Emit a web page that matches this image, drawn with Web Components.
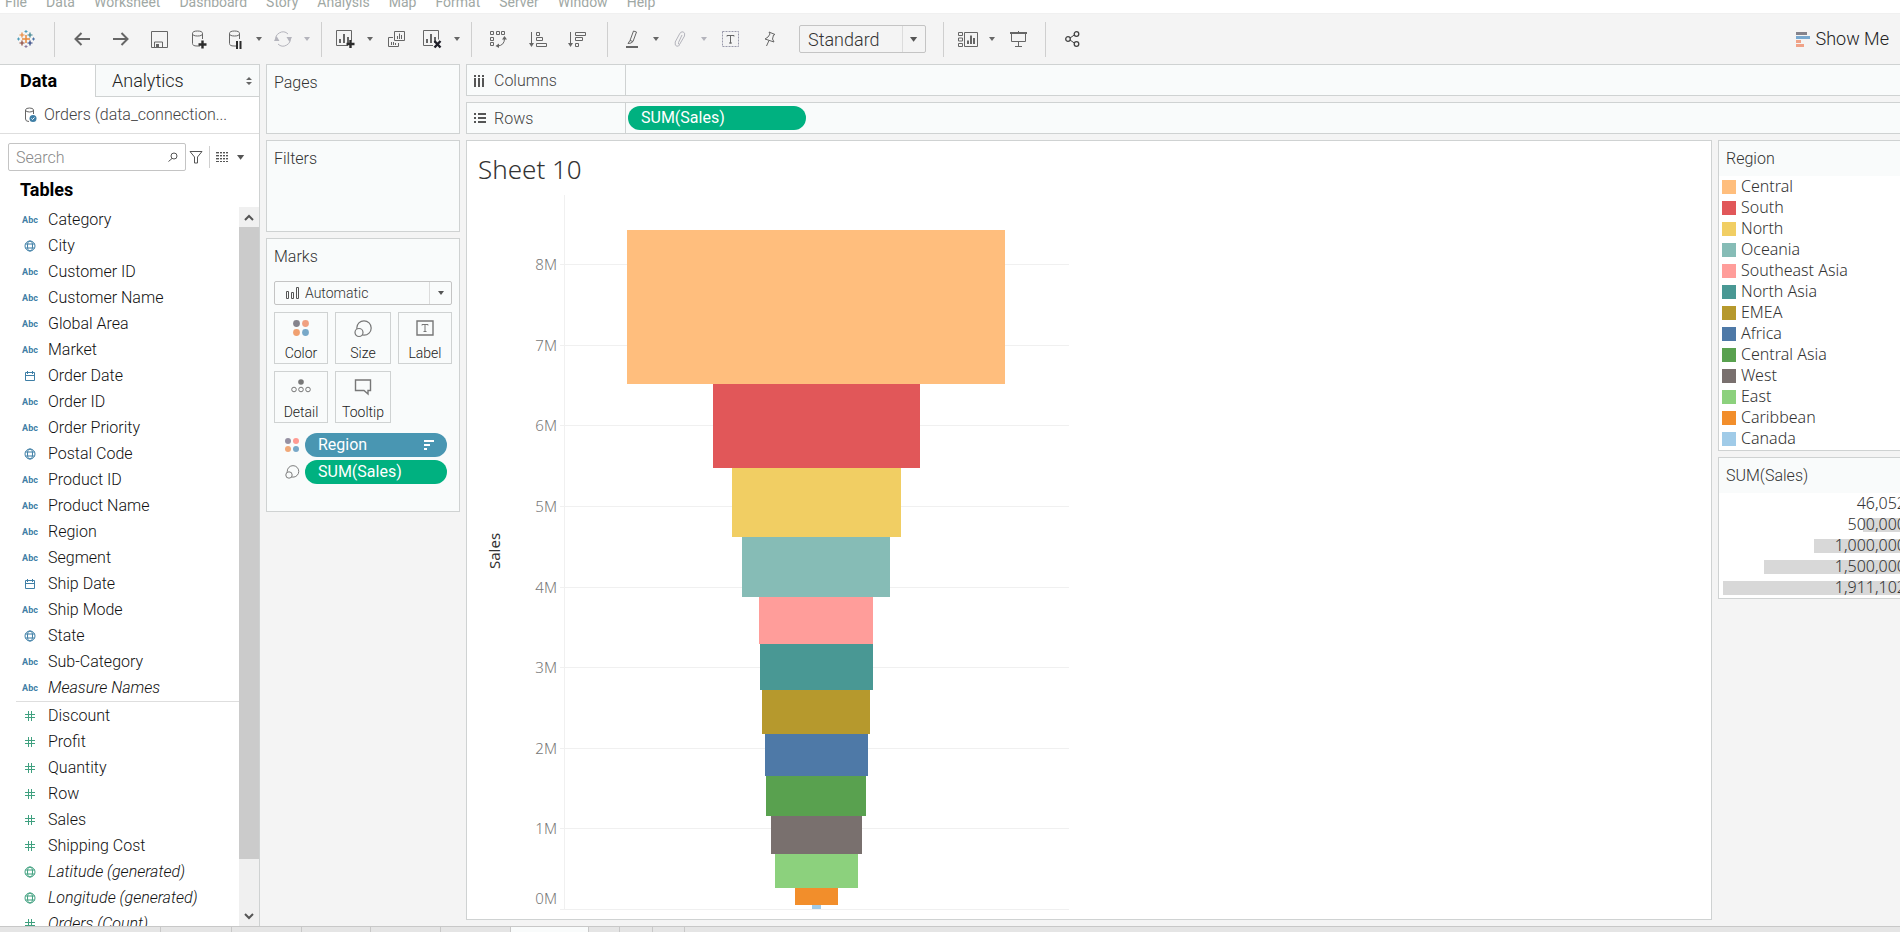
<!DOCTYPE html>
<html lang="en">
<head>
<meta charset="utf-8">
<title>Workbook - Sheet 10</title>
<style>
html,body{margin:0;height:100%}
body{overflow:hidden;font:300 16px/20px Roboto,"Liberation Sans",sans-serif;color:#333;background:#f4f4f4}
</style>
</head>
<body>
<wb-app></wb-app>
<script>
const BASE = '*{box-sizing:border-box}button{font:inherit;color:inherit;background:none;border:0;padding:0;margin:0}';

function define(name, css, render) {
  customElements.define(name, class extends HTMLElement {
    connectedCallback() {
      if (this.shadowRoot) return;
      const t = document.createElement('template');
      t.innerHTML = `<style>${BASE}${css}</style>${render(this)}`;
      this.attachShadow({mode: 'open'}).append(t.content.cloneNode(true));
    }
  });
}

/* icon artwork: [width, height, markup] */
const barsIn = (x, y) => `<path stroke-width="2" d="M${x} ${y}v-4M${x + 4} ${y}v-9M${x + 8} ${y}v-6"/>`;
const cyl = '<path d="M9 16H6Q1.500 16 1.500 13.500V3.500"/><path d="M11.500 3.500V9"/><ellipse cx="6.500" cy="3.500" rx="5" ry="2.500"/>';
const ICONS = {
  logo: [18, 18, '<path stroke="#e8883a" stroke-width="1.500" d="M5 9h8M9 5v8"/><path stroke="#e8883a" stroke-width="1.200" d="M5 2.500v5M2.500 5h5"/><path stroke="#36808d" stroke-width="1.200" d="M13 2.500v5M10.500 5h5"/><path stroke="#8a4436" stroke-width="1.200" d="M5 10.500v5M2.500 13h5"/><path stroke="#2a3f7e" stroke-width="1.200" d="M13 10.500v5M10.500 13h5"/><path stroke="#4f9dba" d="M9 0v3M7.500 1.500h3M1.500 7.500v3M0 9h3"/><path stroke="#4a74a8" d="M16.500 7.500v3M15 9h3"/><path stroke="#8a7ba0" d="M9 15v3M7.500 16.500h3"/>'],
  back: [16, 14, '<path stroke-width="2" d="M16 7H1.500M7.500 1L1.500 7l6 6"/>'],
  fwd: [16, 14, '<path stroke-width="2" d="M0 7h14.500M8.500 1l6 6-6 6"/>'],
  save: [17, 17, '<path d="M.5.5h16v16H.5zM3.500 16v-5h8v5"/><path stroke="none" fill="currentColor" d="M5 13h3v3H5z"/>'],
  dbadd: [16, 19, cyl + '<path stroke="#2b2b2b" stroke-width="2.400" d="M7.500 14.500h8M11.500 10.500v8"/>'],
  dbpause: [14, 19, cyl + '<path stroke="#2b2b2b" stroke-width="2" d="M9 11v8M12.500 11v8"/>'],
  dbok: [13, 16, '<path d="M5 14.500Q1.500 14.500 1.500 12V3M9.500 3v4"/><ellipse cx="5.500" cy="3" rx="4" ry="2"/><circle cx="9" cy="11.500" r="3.500" fill="#3f7fa6" stroke="none"/><path stroke="#fff" d="M7.500 11.500l1 1 2-2"/>'],
  refresh: [18, 18, '<path d="M2 11A7.200 7.200 0 0 1 14 4M16 7A7.200 7.200 0 0 1 4 14"/><path stroke="none" fill="currentColor" d="M0 11l2.500-5 3 5zM12.500 7l3 5L18 7z"/>'],
  wsadd: [20, 18, '<path d="M12 15.500H.5V.5h15v10"/>' + barsIn(4, 13) + '<path stroke="#2b2b2b" stroke-width="2.400" d="M10.500 14h8M14.500 10v8"/>'],
  wsdel: [20, 18, '<path d="M10 15.500H.5V.5h15v9"/>' + barsIn(4, 13) + '<path stroke="#20202a" stroke-width="2.400" d="M11.500 11l6 6.500M17.500 11l-6 6.500"/>'],
  wsdup: [17, 16, '<path d="M6.500.5h10v9h-10zM5 6.500H.5v9h10V12"/><path d="M9.500 8V5M11.500 8V2.500M13.500 8V4M3.500 14v-3M5.500 14v-3M7.500 14v-2"/>'],
  swap: [17, 17, '<path d="M.5.5h3v3h-3zM6.500.5h3v3h-3zM11.500.5h3v3h-3zM.5 6.500h3v3h-3zM.5 11.500h3v3h-3zM14.500 7.500q0 7-7 7.500"/><path stroke="none" fill="currentColor" d="M12 8.500l2.500-3.500L17 8.500zM9 12.500v4.500L5.500 15z"/>'],
  sortasc: [18, 15, '<path d="M2.500 0v12M7.500.5h3v3h-3zM7.500 5.500h6v3h-6zM7.500 11.500h10v3h-10z"/><path stroke="none" fill="currentColor" d="M0 11h5l-2.500 4z"/>'],
  sortdesc: [18, 15, '<path d="M2.500 0v12M7.500.5h10v3h-10zM7.500 5.500h7v3h-7zM7.500 11.500h3v3h-3z"/><path stroke="none" fill="currentColor" d="M0 11h5l-2.500 4z"/>'],
  pen: [12, 18, '<path d="M7.500 1l3 1L7 11.500l-3-1zM4 10.500L2 13.500l3-.500 2-1.500"/><path stroke-width="2" d="M0 17h12"/>'],
  clip: [12, 16, '<path d="M8 4L4.500 11.500Q4 13.500 5.500 13.500L10.500 5Q11.500 1.500 9 .8 6.500.5 5.500 3L1.200 11Q.5 15 3 15.300 5 15 6 13.500"/>'],
  text: [17, 16, '<path stroke-dasharray="2 1" stroke="#99a" d="M.5.5h16v15H.5z"/><path d="M5 5.500V4.500h7v1M8.500 4.500v8M7 12h3"/>'],
  pin: [12, 16, '<path d="M5 1l6 2.500-1.500.500L8.500 8l1.500 3L1 8l3-2L6 3zM5 9.500L2.500 15"/>'],
  cards: [20, 15, '<path d="M.5.500h4v3h-4zM.5 6h4v3h-4zM.5 11.500h4v3h-4zM6.500.5h13v14h-13z"/><path stroke-width="2" d="M10 12V8.500M13 12V3.500M16 12V6"/>'],
  present: [17, 16, '<path stroke-width="2" d="M0 2h17"/><path d="M8.500 0v1M1.500 2.500v8h14v-8M8.500 10.500v5M5 15.500h7"/>'],
  share: [15, 16, '<path stroke="#444" d="M5 7l5-3.500M5 9l5 3.500"/><g stroke="#444" stroke-width="1.300"><circle cx="3" cy="8" r="2.300"/><circle cx="11.500" cy="3" r="2.300"/><circle cx="11.500" cy="13" r="2.300"/></g>'],
  showme: [14, 15, '<g stroke="none"><path fill="#85838c" d="M0 0h11v3H0z"/><path fill="#78a8cf" d="M0 4h14v3H0z"/><path fill="#f0a287" d="M0 8h5v3H0zM0 12h8v3H0z"/></g>'],
  caret: [6, 4, '<path stroke="none" fill="currentColor" d="M0 0h6L3 4z"/>'],
  updown: [6, 8, '<path stroke="none" fill="currentColor" d="M0 3L3 0l3 3zM0 5h6L3 8z"/>'],
  mag: [10, 10, '<circle cx="6" cy="4" r="3"/><path d="M4 6.500L.5 9.500"/>'],
  funnel: [14, 13, '<path d="M1 .5h12L8.500 6v6h-3V6z"/>'],
  grid: [12, 10, '<path d="M0 .5h12M0 3.500h12M0 6.500h12M0 9.500h12" stroke-dasharray="3 1 2 1 2 1 2 1"/><path stroke-opacity=".4" d="M0 1.500h12M0 4.500h12M0 7.500h12" stroke-dasharray="3 1 2 1 2 1 2 1"/>'],
  cols: [10, 12, '<path stroke-width="2" d="M1 0v2M5 0v2M9 0v2M1 3v9M5 3v9M9 3v9"/>'],
  rows: [12, 11, '<path stroke-width="2" d="M0 1h2M0 5h2M0 9h2M4 1h8M4 5h8M4 9h8"/>'],
  globe: [12, 12, '<circle cx="6" cy="6" r="5"/><ellipse cx="6" cy="6" rx="2.500" ry="5"/><path d="M1.500 4h9M1.500 8h9"/>'],
  date: [10, 10, '<path d="M.5 1.500h9v8h-9zM0 4.500h10M2.500 0v3M7.500 0v3"/>'],
  hash: [10, 10, '<path d="M0 3.500h10M0 6.500h10M3.500 0v10M6.500 0v10"/>'],
  up: [10, 7, '<path stroke-width="2" d="M1 6l4-4 4 4"/>'],
  down: [10, 7, '<path stroke-width="2" d="M1 1l4 4 4-4"/>'],
  bars: [14, 12, '<path d="M.5 4.500h2v7h-2zM5.500 5.500h2v6h-2zM10.500.5h2v11h-2z"/>'],
  color: [16, 16, '<g stroke="none"><circle cx="3.500" cy="3.500" r="3.400" fill="#85838c"/><circle cx="12.500" cy="3.500" r="3.400" fill="#f0a080"/><circle cx="3.500" cy="12.500" r="3.400" fill="#f0a070"/><circle cx="12.500" cy="12.500" r="3.400" fill="#78a8c8"/></g>'],
  colors: [14, 14, '<g stroke="none"><circle cx="3" cy="3" r="3" fill="#9690a2"/><circle cx="11" cy="3" r="3" fill="#ff9a92"/><circle cx="3" cy="11" r="3" fill="#f0a878"/><circle cx="11" cy="11" r="3" fill="#78a8c8"/></g>'],
  size: [18, 17, '<circle cx="10" cy="8" r="7.200" stroke-width="1.200"/><circle cx="5" cy="12.500" r="4" fill="#f9fbfb" stroke-width="1.200"/>'],
  label: [18, 16, '<path stroke-width="1.400" d="M1 1h16v14H1z"/><path d="M6 5.500v-1h6v1M9 4.500v7M7.500 11.500h3"/>'],
  detail: [20, 14, '<circle cx="10" cy="3" r="2.800" fill="currentColor" stroke="none"/><circle cx="3" cy="10.500" r="2.300"/><circle cx="10" cy="10.500" r="2.300"/><circle cx="17" cy="10.500" r="2.300"/>'],
  tip: [18, 16, '<path stroke-width="1.400" d="M1.500 1h15v10.500H14V15l-4-3.500H1.500z"/>'],
  sort: [10, 10, '<path stroke-width="2" d="M0 1h10M0 5h6M0 9h3"/>']
};
define('wb-icon', ':host{display:block;flex:none}svg{display:block;overflow:visible}', el => {
  const [w, h, art] = ICONS[el.getAttribute('name')];
  const s = Number(el.getAttribute('scale') || 1);
  return `<svg width="${w * s}" height="${h * s}" viewBox="0 0 ${w} ${h}" fill="none" stroke="currentColor" aria-hidden="true">${art}</svg>`;
});

define('wb-menubar', `
:host{display:block;background:#fff}
nav{display:flex;align-items:flex-end;gap:19px;height:13px;padding-left:5px;overflow:hidden;font-size:14px;font-weight:400;color:#9fa8a4}
button{line-height:22px}`, () =>
  `<nav>${'File Data Worksheet Dashboard Story Analysis Map Format Server Window Help'.split(' ').map(m => `<button>${m}</button>`).join('')}</nav>`);

define('wb-tool', `
:host{display:flex}
button{display:flex;align-items:center;justify-content:center;width:39px;height:30px;color:#666}
:host([menu]) .main{width:34px}
.more{width:14px}
:host([off]) button{color:#b4b4bc}`, el => {
  const n = el.getAttribute('name');
  return `<button class="main" aria-label="${n}"><wb-icon name="${n}"></wb-icon></button>` +
    (el.hasAttribute('menu') ? `<button class="more" aria-label="${n} options"><wb-icon name="caret"></wb-icon></button>` : '');
});

define('wb-toolbar', `
:host{display:flex;align-items:center;height:51px;background:#f4f4f4;border-top:1px solid #f0f0f0}
i{width:1px;height:35px;margin:0 7px;background:#cfcfcf}
.home{display:flex;padding:0 2px 0 6px}
.sorts{display:flex;padding-right:4px}
.fit{display:flex;align-items:center;width:127px;height:28px;margin:0 10px;border:1px solid #c4c4c4;border-radius:2px;position:relative}
select{appearance:none;width:100%;height:100%;border:0;background:none;font:300 18px Roboto,sans-serif;color:#333;padding:0 8px}
.drop{position:absolute;right:0;top:0;width:23px;height:26px;border-left:1px solid #dcdcdc;display:grid;place-items:center;color:#555;pointer-events:none}
.show{display:flex;align-items:center;gap:6px;margin-left:auto;padding-right:11px;font-size:18px;color:#222}`, () => `
<span class="home"><wb-tool name="logo"></wb-tool></span><i></i>
<wb-tool name="back"></wb-tool><wb-tool name="fwd"></wb-tool><wb-tool name="save"></wb-tool><wb-tool name="dbadd"></wb-tool>
<wb-tool name="dbpause" menu></wb-tool><wb-tool name="refresh" menu off></wb-tool><i></i>
<wb-tool name="wsadd" menu></wb-tool><wb-tool name="wsdup"></wb-tool><wb-tool name="wsdel" menu></wb-tool><i></i>
<span class="sorts"><wb-tool name="swap"></wb-tool><wb-tool name="sortasc"></wb-tool><wb-tool name="sortdesc"></wb-tool></span><i></i>
<wb-tool name="pen" menu></wb-tool><wb-tool name="clip" menu off></wb-tool><wb-tool name="text"></wb-tool><wb-tool name="pin"></wb-tool>
<span class="fit"><select aria-label="Fit"><option>Standard</option><option>Entire View</option></select><span class="drop"><wb-icon name="caret" scale="1.2"></wb-icon></span></span><i></i>
<wb-tool name="cards" menu></wb-tool><wb-tool name="present"></wb-tool><i></i><wb-tool name="share"></wb-tool>
<button class="show"><wb-icon name="showme"></wb-icon>Show Me</button>`);

define('wb-field', `
:host{display:flex;align-items:center;height:26px;padding-left:20px;color:#3f7fa6}
:host([measure]){color:#3fa07f}
.i{width:20px;display:grid;place-items:center;margin-right:8px;flex:none}
b{font:700 9px/12px Roboto,sans-serif}
.n{color:#111;white-space:nowrap}
:host([calc]) .n{font-style:italic}`, el => {
  const t = el.getAttribute('type');
  return `<span class="i">${t === 'abc' ? '<b>Abc</b>' : `<wb-icon name="${t}"></wb-icon>`}</span><span class="n"><slot></slot></span>`;
});

const FIELDS = [['Category'], ['City', 'globe'], ['Customer ID'], ['Customer Name'], ['Global Area'], ['Market'], ['Order Date', 'date'],
  ['Order ID'], ['Order Priority'], ['Postal Code', 'globe'], ['Product ID'], ['Product Name'], ['Region'], ['Segment'],
  ['Ship Date', 'date'], ['Ship Mode'], ['State', 'globe'], ['Sub-Category'], ['Measure Names', 'abc', 'calc']];
const MEASURES = [['Discount'], ['Profit'], ['Quantity'], ['Row'], ['Sales'], ['Shipping Cost'],
  ['Latitude (generated)', 'globe', 'calc'], ['Longitude (generated)', 'globe', 'calc'], ['Orders (Count)', 'hash', 'calc']];
const fieldRow = (d, extra) => ([n, t = d, c = '']) => `<wb-field type="${t}" ${c} ${extra}>${n}</wb-field>`;

define('wb-datapane', `
:host{display:flex;flex-direction:column;min-height:0;background:#fff;border-top:1px solid #cfd2d2;border-right:1px solid #cfd2d2}
.tabs{display:flex;height:32px;font-size:18px;color:#222}
.tabs button{text-align:left}
.on{width:95px;padding-left:20px;font-weight:700;color:#000}
.off{flex:1;display:flex;align-items:center;justify-content:space-between;padding:0 7px 0 16px;background:#f8fafa;border:solid #cfd2d2;border-width:0 0 1px 1px}
.off wb-icon{color:#666}
.src{display:flex;align-items:center;gap:7px;height:37px;padding-left:24px;border-bottom:1px solid #dedede;color:#444;white-space:nowrap}
.src wb-icon{color:#666}
.find{display:flex;align-items:center;padding:9px 0 0 8px;color:#555}
label{display:flex;align-items:center;width:178px;height:28px;border:1px solid #c4c4c4;border-radius:2px;padding:0 7px}
input{flex:1;min-width:0;border:0;outline:0;background:none;padding:0;font:300 16px Roboto,sans-serif;color:#333}
input::placeholder{color:#888;opacity:1}
.fl{margin:0 6px 0 3px}
.sep{width:1px;height:22px;background:#d0d0d0;margin-right:6px}
.gr{margin-right:9px}
h2{margin:0;padding:9px 0 7px 20px;font:700 18px/20px Roboto,sans-serif;color:#000}
.list{flex:1;min-height:0;display:flex}
.rows{flex:1;overflow:hidden}
hr{margin:0 0 1px 16px;border:0;border-top:1px solid #dedede}
.bar{width:20px;display:flex;flex-direction:column;background:#f0f0f0;color:#555}
.bar button{height:20px;display:grid;place-items:center}
.thumb{flex:632;background:#cbcbcb}
.rest{flex:47}`, () => `
<div class="tabs"><button class="on">Data</button><button class="off">Analytics<wb-icon name="updown"></wb-icon></button></div>
<div class="src"><wb-icon name="dbok"></wb-icon>Orders (data_connection...</div>
<div class="find"><label><input type="text" placeholder="Search" aria-label="Search"><wb-icon name="mag"></wb-icon></label>
<button class="fl" aria-label="Filter"><wb-icon name="funnel"></wb-icon></button><span class="sep"></span>
<button class="gr" aria-label="View"><wb-icon name="grid"></wb-icon></button><button aria-label="View options"><wb-icon name="caret" scale="1.2"></wb-icon></button></div>
<h2>Tables</h2>
<div class="list"><div class="rows">${FIELDS.map(fieldRow('abc', '')).join('')}<hr>${MEASURES.map(fieldRow('hash', 'measure')).join('')}</div>
<div class="bar"><button aria-label="Scroll up"><wb-icon name="up"></wb-icon></button><span class="thumb"></span><span class="rest"></span><button aria-label="Scroll down"><wb-icon name="down"></wb-icon></button></div></div>`);

define('wb-card', `
:host{display:block;background:#f9fbfb;border:1px solid #cfd2d2}
h3{margin:0;padding:8px 7px 7px;font:300 16px/20px Roboto,sans-serif;color:#333}`, el =>
  `<h3>${el.getAttribute('heading')}</h3><slot></slot>`);

define('wb-pill', `
:host{display:block}
button{display:flex;align-items:center;justify-content:space-between;width:100%;height:24px;padding:0 13px;border-radius:12px;background:#00b180;color:#fff;font-weight:400}
:host([discrete]) button{background:#4996b2}`, el =>
  `<button><slot></slot>${el.hasAttribute('discrete') ? '<wb-icon name="sort"></wb-icon>' : ''}</button>`);

define('wb-marks', `
:host{display:block;padding:7px 7px 27px}
.type{display:flex;align-items:center;height:24px;border:1px solid #c4c4c4;border-radius:2px;position:relative;color:#555}
.type wb-icon{margin-left:11px}
select{appearance:none;position:absolute;inset:0;border:0;background:none;font:300 14px Roboto,sans-serif;color:#333;padding:0 0 0 30px}
.drop{position:absolute;right:0;top:0;width:22px;height:22px;border-left:1px solid #dcdcdc;display:grid;place-items:center;pointer-events:none}
.type .drop wb-icon{margin:0}
.g{display:grid;grid-template-columns:54px 56px 54px;gap:7px;margin:7px 0 10px}
.g button{display:flex;flex-direction:column;align-items:center;justify-content:space-between;height:52px;padding:7px 0 1px;border:1px solid #cfd2d2;font-size:14px;line-height:18px;color:#222}
.g wb-icon{color:#777}
.p{display:grid;grid-template-columns:14px 1fr;gap:3px 6px;align-items:center;padding:0 5px 0 11px;color:#777}`, () => `
<div class="type"><wb-icon name="bars"></wb-icon><select aria-label="Mark type"><option>Automatic</option><option>Bar</option></select><span class="drop"><wb-icon name="caret"></wb-icon></span></div>
<div class="g">${[['Color', 'color'], ['Size', 'size'], ['Label', 'label'], ['Detail', 'detail'], ['Tooltip', 'tip']].map(([n, i]) => `<button><wb-icon name="${i}"></wb-icon>${n}</button>`).join('')}</div>
<div class="p"><wb-icon name="colors"></wb-icon><wb-pill discrete>Region</wb-pill><wb-icon name="size" scale="0.8"></wb-icon><wb-pill>SUM(Sales)</wb-pill></div>`);

define('wb-shelf', `
:host{display:flex;height:32px;background:#f9fbfb;border:1px solid #cfd2d2;border-right:0}
.l{display:flex;align-items:center;gap:8px;width:159px;padding:1px 0 0 7px;border-right:1px solid #cfd2d2;color:#444}
wb-icon{width:12px;color:#555}
.f{flex:1;padding:3px 2px}
::slotted(*){width:178px}`, el =>
  `<span class="l"><wb-icon name="${el.getAttribute('icon')}"></wb-icon>${el.getAttribute('label')}</span><div class="f"><slot></slot></div>`);

/* colour, name, band top, band bottom, bar left, bar width inside the plot */
const REGIONS = [
  ['#ffbe7d', 'Central', 40, 194, 160, 378], ['#e15759', 'South', 194, 278, 246, 207], ['#f1ce63', 'North', 278, 347, 265, 169],
  ['#86bcb6', 'Oceania', 347, 407, 275, 148], ['#ff9d9a', 'Southeast Asia', 407, 454, 292, 114], ['#499894', 'North Asia', 454, 500, 293, 113],
  ['#b6992d', 'EMEA', 500, 544, 295, 108], ['#4e79a7', 'Africa', 544, 586, 298, 103], ['#59a14f', 'Central Asia', 586, 626, 299, 100],
  ['#79706e', 'West', 626, 664, 304, 91], ['#8cd17d', 'East', 664, 698, 308, 83], ['#f28e2b', 'Caribbean', 698, 715, 328, 43],
  ['#a0cbe8', 'Canada', 715, 719, 345, 9]];
const TICKS = [[8, 74], [7, 155], [6, 235], [5, 316], [4, 397], [3, 477], [2, 558], [1, 638], [0, 719]];

define('wb-sheet', `
:host{display:block;background:#fff;border:1px solid #cfd2d2;overflow:hidden}
h1{margin:0;padding:11px 11px 4px;font:300 26px/34px "Noto Sans","Open Sans",sans-serif;color:#333}
svg{display:block;font:300 15px "Noto Sans","Open Sans",sans-serif}`, () => `
<h1>Sheet 10</h1>
<svg width="610" height="726" role="img" aria-label="Sales by region">
<g shape-rendering="crispEdges"><path stroke="#f0f0f0" d="M97.500 5V719"/>
${TICKS.map(([, y]) => `<path stroke="#f0f0f0" d="M93 ${y + .5}H602"/>`).join('')}
${REGIONS.map(([c, , t, b, x, w]) => `<rect x="${x}" y="${t}" width="${w}" height="${b - t}" fill="${c}"/>`).join('')}</g>
<g fill="#777" text-anchor="end">${TICKS.map(([n, y]) => `<text x="90" y="${n ? y + 6 : y - 5}">${n}M</text>`).join('')}</g>
<text transform="translate(33 361) rotate(-90)" text-anchor="middle" font-weight="400" fill="#333">Sales</text>
</svg>`);

define('wb-legend', `
:host{display:block;background:#fff}
ul{margin:0;padding:0 0 1px 3px;list-style:none;font:300 16px/21px "Noto Sans","Open Sans",sans-serif;color:#333}
li{display:flex;align-items:center;gap:5px}
span{width:14px;height:14px}`, () =>
  `<ul>${REGIONS.map(([c, n]) => `<li><span style="background:${c}"></span>${n}</li>`).join('')}</ul>`);

define('wb-sizes', `
:host{display:block;background:#fff}
div{display:grid;justify-items:end;align-items:center;height:21px;padding-right:1px;font:300 16px/21px "Noto Sans","Open Sans",sans-serif;color:#333}
div>*{grid-area:1/1}
i{height:14px;background:#d8d8d8}
span{padding-right:7px}`, () =>
  [['46,052', 5], ['500,000', 50], ['1,000,000', 99], ['1,500,000', 149], ['1,911,102', 190]].map(([n, w]) => `<div><i style="width:${w}px"></i><span>${n}</span></div>`).join(''));

define('wb-tabs', `
:host{display:flex;height:6px;background:#e5e5e5;border-top:1px solid #c8c8c8}
i{border-right:1px solid #c8c8c8}
.on{background:#f9fbfb}`, () =>
  [161, 71, 70, 69, 70, 70, 78, 31, 33, 32].map((w, k) => `<i class="${k === 6 ? 'on' : ''}" style="width:${w}px"></i>`).join(''));

define('wb-app', `
:host{display:flex;flex-direction:column;height:100vh;overflow:hidden}
.body{flex:1;min-height:0;display:grid;grid-template-columns:260px 194px 1fr;column-gap:6px}
.side{display:grid;align-content:start;gap:6px;grid-template-rows:70px 92px auto}
.main{display:flex;flex-direction:column;gap:6px;min-width:0;min-height:0}
.view{flex:1;min-height:0;display:grid;grid-template-columns:1fr 182px;column-gap:6px;padding-bottom:6px}
.keys{display:flex;flex-direction:column;gap:6px}
.keys wb-card{width:197px}`, () => `
<wb-menubar></wb-menubar><wb-toolbar></wb-toolbar>
<div class="body"><wb-datapane></wb-datapane>
<div class="side"><wb-card heading="Pages"></wb-card><wb-card heading="Filters"></wb-card><wb-card heading="Marks"><wb-marks></wb-marks></wb-card></div>
<div class="main"><wb-shelf label="Columns" icon="cols"></wb-shelf><wb-shelf label="Rows" icon="rows"><wb-pill>SUM(Sales)</wb-pill></wb-shelf>
<div class="view"><wb-sheet></wb-sheet><div class="keys"><wb-card heading="Region"><wb-legend></wb-legend></wb-card><wb-card heading="SUM(Sales)"><wb-sizes></wb-sizes></wb-card></div></div></div></div>
<wb-tabs></wb-tabs>`);
</script>
</body>
</html>
